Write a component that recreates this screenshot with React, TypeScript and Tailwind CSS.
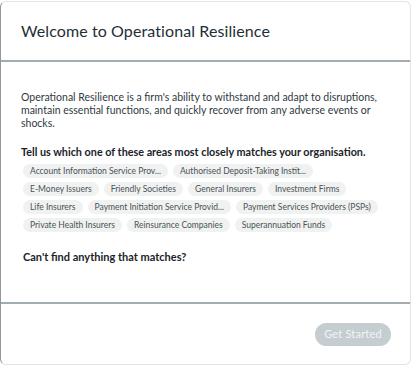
const areas = [
  'Account Information Service Prov...',
  'Authorised Deposit-Taking Instit...',
  'E-Money Issuers',
  'Friendly Societies',
  'General Insurers',
  'Investment Firms',
  'Life Insurers',
  'Payment Initiation Service Provid...',
  'Payment Services Providers (PSPs)',
  'Private Health Insurers',
  'Reinsurance Companies',
  'Superannuation Funds',
]

export default function App() {
  return (
    <div className="w-[412px] h-[366px] bg-white pt-px" style={{ fontFamily: 'Lato, "Open Sans", sans-serif' }}>
      <div className="w-[411px] h-[364px] flex flex-col rounded-[6px] border border-[#e1e5e7] border-l-[#8f999d] bg-white overflow-hidden">
        {/* Header */}
        <div className="h-[60px] shrink-0 flex items-center px-[20px] border-b-2 border-[#a3acb0]">
          <h1 className="text-[16px] text-[#1f2f36] tracking-[0.1px]">Welcome to Operational Resilience</h1>
        </div>

        {/* Body */}
        <div className="flex-1 pl-[20px] pr-[14px] pt-[29px]">
          <p className="text-[10.5px] leading-[13px] text-[#2f3a3f]">
            Operational Resilience is a firm's ability to withstand and adapt to disruptions, maintain essential functions, and quickly recover from any adverse events or shocks.
          </p>
          <p className="mt-[15px] text-[10.8px] leading-[13px] font-bold text-[#1a2328]">
            Tell us which one of these areas most closely matches your organisation.
          </p>
          <div className="mt-[6px] ml-[2px] w-[360px] flex flex-wrap gap-x-[5px] gap-y-[4px]">
            {areas.map((a) => (
              <span
                key={a}
                className="h-[14px] px-[7px] flex items-center rounded-full bg-[#f0f1f1] text-[8.5px] text-[#4a5256] whitespace-nowrap"
              >
                {a}
              </span>
            ))}
          </div>
          <p className="mt-[18px] ml-[2px] text-[11px] leading-[13px] font-bold text-[#1a2328]">
            Can't find anything that matches?
          </p>
        </div>

        {/* Footer */}
        <div className="h-[62px] shrink-0 flex items-center justify-end pr-[19px] border-t-2 border-[#a3acb0]">
          <button className="w-[76px] h-[23px] rounded-full bg-[#c5cdd1] text-[11px] text-[#f2f4f5] tracking-[0.2px]">
            Get Started
          </button>
        </div>
      </div>
    </div>
  )
}
